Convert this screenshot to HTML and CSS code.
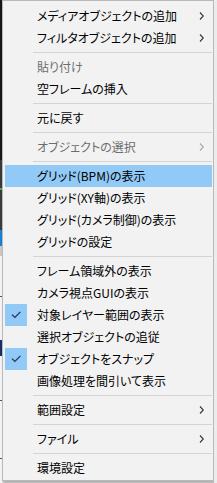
FILE: index.html
```html
<!DOCTYPE html>
<html lang="ja">
<head>
  <meta charset="UTF-8">
  <meta name="viewport" content="width=device-width, initial-scale=1.0">
  <title>Context menu</title>
  <link rel="stylesheet" href="styles.css">
</head>
<body>

  <div class="screen">
    <div class="backdrop-left"></div>

    <div class="menu">
      <div class="item">
        <span class="mark"></span>
        <span class="label">メディアオブジェクトの追加</span>
        <svg class="arrow" width="5" height="8" viewBox="0 0 5 8"><path d="M1 0.5 L4.3 4 L1 7.5" /></svg>
      </div>
      <div class="item">
        <span class="mark"></span>
        <span class="label">フィルタオブジェクトの追加</span>
        <svg class="arrow" width="5" height="8" viewBox="0 0 5 8"><path d="M1 0.5 L4.3 4 L1 7.5" /></svg>
      </div>
      <div class="sep"></div>
      <div class="item disabled">
        <span class="mark"></span>
        <span class="label">貼り付け</span>
      </div>
      <div class="item">
        <span class="mark"></span>
        <span class="label">空フレームの挿入</span>
      </div>
      <div class="sep"></div>
      <div class="item">
        <span class="mark"></span>
        <span class="label">元に戻す</span>
      </div>
      <div class="sep"></div>
      <div class="item disabled">
        <span class="mark"></span>
        <span class="label">オブジェクトの選択</span>
        <svg class="arrow" width="5" height="8" viewBox="0 0 5 8"><path d="M1 0.5 L4.3 4 L1 7.5" /></svg>
      </div>
      <div class="sep"></div>
      <div class="item hover">
        <span class="mark"></span>
        <span class="label">グリッド(BPM)の表示</span>
      </div>
      <div class="item">
        <span class="mark"></span>
        <span class="label">グリッド(XY軸)の表示</span>
      </div>
      <div class="item">
        <span class="mark"></span>
        <span class="label">グリッド(カメラ制御)の表示</span>
      </div>
      <div class="item">
        <span class="mark"></span>
        <span class="label">グリッドの設定</span>
      </div>
      <div class="sep"></div>
      <div class="item">
        <span class="mark"></span>
        <span class="label">フレーム領域外の表示</span>
      </div>
      <div class="item">
        <span class="mark"></span>
        <span class="label">カメラ視点GUIの表示</span>
      </div>
      <div class="item">
        <span class="mark checked"><svg width="22" height="22" viewBox="0 0 22 22"><path d="M7 10.6 L9.9 13.4 L15.4 7.9" /></svg></span>
        <span class="label">対象レイヤー範囲の表示</span>
      </div>
      <div class="item">
        <span class="mark"></span>
        <span class="label">選択オブジェクトの追従</span>
      </div>
      <div class="item">
        <span class="mark checked"><svg width="22" height="22" viewBox="0 0 22 22"><path d="M7 10.6 L9.9 13.4 L15.4 7.9" /></svg></span>
        <span class="label">オブジェクトをスナップ</span>
      </div>
      <div class="item">
        <span class="mark"></span>
        <span class="label">画像処理を間引いて表示</span>
      </div>
      <div class="sep"></div>
      <div class="item">
        <span class="mark"></span>
        <span class="label">範囲設定</span>
        <svg class="arrow" width="5" height="8" viewBox="0 0 5 8"><path d="M1 0.5 L4.3 4 L1 7.5" /></svg>
      </div>
      <div class="sep"></div>
      <div class="item">
        <span class="mark"></span>
        <span class="label">ファイル</span>
        <svg class="arrow" width="5" height="8" viewBox="0 0 5 8"><path d="M1 0.5 L4.3 4 L1 7.5" /></svg>
      </div>
      <div class="sep"></div>
      <div class="item">
        <span class="mark"></span>
        <span class="label">環境設定</span>
      </div>
    </div>

    <div class="backdrop-right"></div>
  </div>

</body>
</html>
```

FILE: styles.css
```css
html,
body {
  margin: 0;
  padding: 0;
}

body {
  background: #e6e6e6;
  font-family: "Noto Sans CJK JP", "Noto Sans", sans-serif;
  font-size: 12px;
  color: #000;
}

.screen {
  display: flex;
  align-items: flex-start;
  width: 217px;
  height: 483px;
  overflow: hidden;
}

/* bits of the window behind the menu */
.backdrop-left {
  width: 2px;
  height: 483px;
  flex-shrink: 0;
  background: linear-gradient(to bottom,
    #161616 0, #161616 160px,
    #3a3a3a 160px, #3a3a3a 188px,
    #4caf50 188px, #4caf50 190px,
    #3a3a3a 190px, #3a3a3a 230px,
    #1a7fd6 230px, #1a7fd6 246px,
    #c8c8c8 246px, #c8c8c8 256px,
    #f4f4f4 256px, #f4f4f4 296px,
    #555 296px, #555 297px,
    #f4f4f4 297px, #f4f4f4 340px,
    #1c2d6b 340px, #1c2d6b 356px,
    #f4f4f4 356px, #f4f4f4 400px,
    #555 400px, #555 401px,
    #f4f4f4 401px, #f4f4f4 458px,
    #555 458px, #555 459px,
    #f4f4f4 459px);
}

.backdrop-right {
  width: 3px;
  height: 483px;
  flex-shrink: 0;
  background: #ececec;
}

.menu {
  width: 212px;
  box-sizing: border-box;
  flex-shrink: 0;
  background: #f2f2f2;
  border: 1px solid #b9b9b9;
  padding: 4px 1px 1px 2px;
  box-shadow: 1px 2px 2px rgba(0, 0, 0, 0.25);
}

.item {
  display: flex;
  align-items: center;
  height: 22px;
  line-height: 22px;
  white-space: nowrap;
}

.item.hover {
  background: #91c9f7;
}

.item.disabled {
  color: #6d6d6d;
}

.mark {
  width: 22px;
  height: 22px;
  flex-shrink: 0;
}

.mark.checked {
  background: #91c9f7;
}

.mark svg {
  display: block;
}

.mark svg path {
  fill: none;
  stroke: #26334f;
  stroke-width: 1.3;
}

.label {
  margin-left: 10px;
  font-feature-settings: "palt";
}

.arrow {
  margin-left: auto;
  margin-right: 8px;
}

.arrow path {
  fill: none;
  stroke: #333;
  stroke-width: 1.1;
}

.item.disabled .arrow path {
  stroke: #a6a6a6;
}

.sep {
  height: 7px;
  display: flex;
  align-items: center;
  padding-left: 28px;
}

.sep::after {
  content: "";
  flex: 1;
  height: 1px;
  background: #d4d4d4;
}
```
